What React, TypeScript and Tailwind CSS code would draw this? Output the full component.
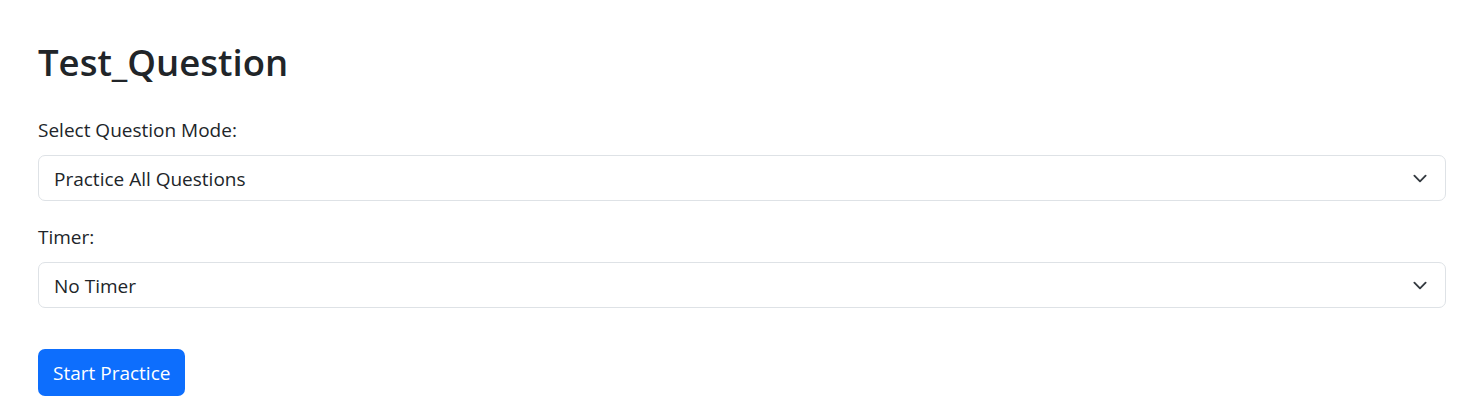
import React from "react";

const Chevron = () => (
  <svg
    className="w-[20px] h-[15px]"
    viewBox="0 0 16 16"
    fill="none"
    stroke="#343a40"
    strokeWidth="2"
    strokeLinecap="round"
    strokeLinejoin="round"
  >
    <path d="m2 5 6 6 6-6" />
  </svg>
);

const SelectBox = ({ value }: { value: string }) => (
  <div className="h-[46px] w-full flex items-center justify-between pl-[15px] pr-[15px] border border-[#dee2e6] rounded-[7px] bg-white text-[19px] text-[#212529]">
    <span className="pt-[2px]">{value}</span>
    <Chevron />
  </div>
);

export default function App() {
  return (
    <div
      className="w-full min-h-[417px] bg-white pt-[38px] pl-[38px] pr-[11px] text-[#212529]"
      style={{ fontFamily: '"Open Sans", "Noto Sans", sans-serif' }}
    >
      <h2 className="text-[36.5px] leading-[48px] font-semibold mb-[29px]">Test_Question</h2>

      <label className="block text-[19px] leading-[30px] mb-[10px]">Select Question Mode:</label>
      <SelectBox value="Practice All Questions" />

      <label className="block text-[19px] leading-[30px] mt-[21px] mb-[10px]">Timer:</label>
      <SelectBox value="No Timer" />

      <button className="mt-[41px] h-[47px] px-[15px] pt-[2px] rounded-[7px] bg-[#0d6efd] text-white text-[19px]">
        Start Practice
      </button>
    </div>
  );
}
